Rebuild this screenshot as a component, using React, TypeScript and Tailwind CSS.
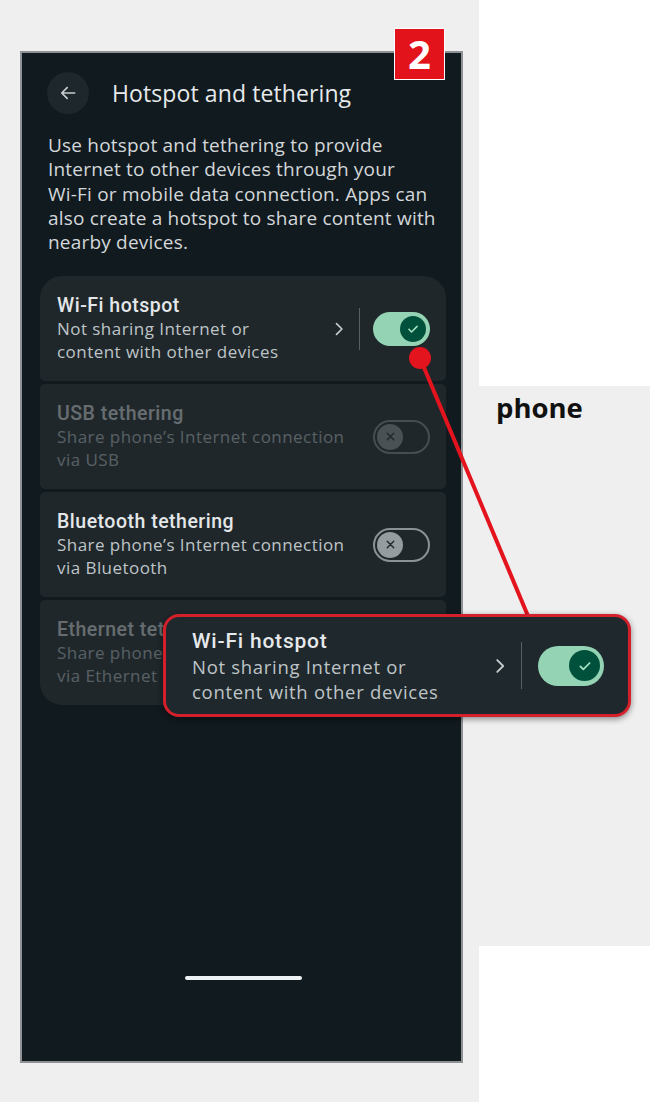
import React from "react";

const font = { fontFamily: "'Open Sans', 'Noto Sans', sans-serif" };
const titleFont = { fontFamily: "Roboto, 'Noto Sans', sans-serif" };

interface ToggleProps {
  on?: boolean;
  big?: boolean;
}

const Toggle: React.FC<ToggleProps> = ({ on, big }) => {
  const track = big ? "w-[66px] h-[40px]" : "w-[57px] h-[34px]";
  const thumb = big ? "w-[31px] h-[31px]" : "w-[26px] h-[26px]";
  if (on) {
    return (
      <div className={`${track} shrink-0 rounded-full bg-[#94d4b4] flex items-center justify-end pr-[4px]`}>
        <div className={`${thumb} rounded-full bg-[#00513b] flex items-center justify-center`}>
          <svg width={big ? 16 : 14} height={big ? 16 : 14} viewBox="0 0 24 24" fill="none">
            <path d="M5 12.5l4.5 4.5L19 7.5" stroke="#a6e3c4" strokeWidth="2.6" strokeLinecap="round" strokeLinejoin="round" />
          </svg>
        </div>
      </div>
    );
  }
  return (
    <div className={`${track} shrink-0 rounded-full border-2 border-[#899296] flex items-center pl-[2px]`}>
      <div className="w-[26px] h-[26px] rounded-full bg-[#949c9f] flex items-center justify-center">
        <svg width="13" height="13" viewBox="0 0 24 24" fill="none">
          <path d="M6 6l12 12M18 6L6 18" stroke="#1f272b" strokeWidth="2.6" strokeLinecap="round" />
        </svg>
      </div>
    </div>
  );
};

const Chevron: React.FC<{ size?: number }> = ({ size = 16 }) => (
  <svg width={size} height={size} viewBox="0 0 24 24" fill="none">
    <path d="M9 5.5l6.5 6.5L9 18.5" stroke="#c6cbcd" strokeWidth="2" strokeLinecap="round" strokeLinejoin="round" />
  </svg>
);

interface RowProps {
  title: string;
  lines: string[];
  on?: boolean;
  link?: boolean;
  disabled?: boolean;
  className?: string;
}

const Row: React.FC<RowProps> = ({ title, lines, on, link, disabled, className }) => (
  <div className={`h-[105px] bg-[#1f272b] flex items-center pl-[17px] pr-[16px] ${className ?? ""}`}>
    <div className={`flex items-center flex-1 ${disabled ? "opacity-[0.36]" : ""}`}>
      <div className="flex-1">
        <div
          className="text-[19.5px] leading-[24px] font-medium tracking-[0.5px] text-[#e4e7e9] whitespace-nowrap"
          style={titleFont}
        >
          {title}
        </div>
        {lines.map((l) => (
          <div key={l} className="text-[17px] leading-[22.5px] tracking-[0.45px] text-[#bec4c7] whitespace-nowrap">
            {l}
          </div>
        ))}
      </div>
      {link && (
        <>
          <Chevron size={20} />
          <div className="w-px h-[42px] bg-[#586064] ml-[10px] mr-[13px]" />
        </>
      )}
      <Toggle on={on} />
    </div>
  </div>
);

export default function App() {
  return (
    <div className="relative w-[650px] h-[1102px] flex bg-[#efefef] overflow-hidden" style={font}>
      <div className="w-[479px] shrink-0 pt-[51px] pl-[20px]">
        <div className="relative w-[443px] h-[1012px] border-2 border-[#8e9294] bg-[#111a1f] flex flex-col">
          <div className="absolute left-[372px] -top-[25px] w-[51px] h-[52px] bg-[#e3131b] border-[1.5px] border-white flex items-center justify-center">
            <span className="text-white text-[40px] font-bold leading-none">2</span>
          </div>

          <div className="flex items-center pt-[19px] pl-[25px]">
            <div className="w-[42px] h-[42px] rounded-full bg-[#1e272c] flex items-center justify-center">
              <svg width="20" height="20" viewBox="0 0 24 24" fill="none">
                <path d="M20 12H5M11 5.5L4.5 12l6.5 6.5" stroke="#c9cdd0" strokeWidth="2" strokeLinecap="round" strokeLinejoin="round" />
              </svg>
            </div>
            <div className="ml-[23px] text-[23px] tracking-[0.1px] text-[#e6e9eb] whitespace-nowrap">Hotspot and tethering</div>
          </div>

          <p className="mt-[19px] ml-[26px] text-[19px] leading-[24.3px] tracking-[0.2px] text-[#d3d7d9] whitespace-nowrap">
            Use hotspot and tethering to provide
            <br />
            Internet to other devices through your
            <br />
            Wi-Fi or mobile data connection. Apps can
            <br />
            also create a hotspot to share content with
            <br />
            nearby devices.
          </p>

          <div className="mt-[22px] ml-[18px] w-[406px] flex flex-col gap-[3px]">
            <Row
              title="Wi-Fi hotspot"
              lines={["Not sharing Internet or", "content with other devices"]}
              on
              link
              className="rounded-t-[22px] rounded-b-[5px]"
            />
            <Row
              title="USB tethering"
              lines={["Share phone’s Internet connection", "via USB"]}
              disabled
              className="rounded-[5px]"
            />
            <Row
              title="Bluetooth tethering"
              lines={["Share phone’s Internet connection", "via Bluetooth"]}
              className="rounded-[5px]"
            />
            <Row
              title="Ethernet tethering"
              lines={["Share phone’s Internet connection", "via Ethernet"]}
              disabled
              className="rounded-b-[22px] rounded-t-[5px]"
            />
          </div>

          <div className="flex-1" />
          <div className="mx-auto mb-[81px] w-[117px] h-[4px] rounded-full bg-[#eef2f3] translate-x-[2px]" />
        </div>
      </div>

      <div className="flex-1 flex flex-col">
        <div className="h-[386px] bg-white" />
        <div className="h-[560px] pl-[17px] pt-[6px]">
          <div className="text-[27.5px] leading-[32px] font-bold text-[#111]">phone</div>
        </div>
        <div className="flex-1 bg-white" />
      </div>

      <svg className="absolute inset-0 pointer-events-none" width="650" height="1102">
        <line x1="420" y1="358" x2="528" y2="616" stroke="#e3141d" strokeWidth="4" />
        <circle cx="420" cy="358" r="11" fill="#e3141d" />
      </svg>

      <div className="absolute left-[163px] top-[614px] w-[468px] h-[103px] rounded-[16px] border-[3px] border-[#d4202b] bg-[#1f282c] shadow-[0_2px_6px_rgba(0,0,0,0.45)] flex items-center pl-[26px] pr-[24px]">
        <div className="flex-1">
          <div
            className="text-[21px] leading-[26px] font-medium tracking-[0.8px] text-[#e6e9eb] whitespace-nowrap"
            style={titleFont}
          >
            Wi-Fi hotspot
          </div>
          <div className="text-[18.5px] leading-[25px] tracking-[0.7px] text-[#bec4c7] whitespace-nowrap">Not sharing Internet or</div>
          <div className="text-[18.5px] leading-[25px] tracking-[0.7px] text-[#bec4c7] whitespace-nowrap">content with other devices</div>
        </div>
        <Chevron size={22} />
        <div className="w-px h-[47px] bg-[#586064] ml-[10px] mr-[16px]" />
        <Toggle on big />
      </div>
    </div>
  );
}
